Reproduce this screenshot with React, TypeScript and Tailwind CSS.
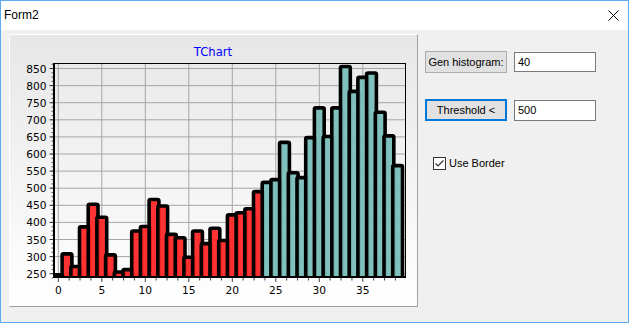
const values = [
  247, 308, 271, 387, 453, 415, 305, 255, 262, 375, 388, 467, 448, 365, 355, 298, 375, 338, 383, 347,
  422, 428, 440, 490, 517, 525, 634, 545, 531, 648, 735, 651, 735, 856, 783, 824, 837, 722, 653, 566,
];

const threshold = 500;

// screen coords of the plot
const X = (i: number) => 58.3 + i * 8.7;
const Y = (v: number) => 68.5 + (850 - v) * 0.342;
const LEFT = 54;
const RIGHT = 405.5;
const TOP = 63;
const BOTTOM = 277;

const yLabels = [850, 800, 750, 700, 650, 600, 550, 500, 450, 400, 350, 300, 250];
const xLabels = [0, 5, 10, 15, 20, 25, 30, 35];

const Chart = () => {
  const minorY: number[] = [];
  for (let v = 237.5; v <= 866; v += 12.5) minorY.push(v);
  const minorX: number[] = [];
  for (let k = 0; X(k) <= RIGHT; k += 1.25) minorX.push(k);

  return (
    <svg width={407} height={271} className="block">
      <defs>
        <clipPath id="plot">
          <rect x={LEFT} y={TOP - 2} width={RIGHT - LEFT + 2} height={BOTTOM - TOP + 2} />
        </clipPath>
      </defs>
      <g transform="translate(-10 -35)" fontFamily="'DejaVu Sans', Verdana, sans-serif" fontSize={10.67}>
        <text x={213} y={56} textAnchor="middle" fill="#0000ff" fontSize={11.6}>
          TChart
        </text>

        {/* grid */}
        {yLabels.map((v) => (
          <line key={`h${v}`} x1={LEFT} x2={RIGHT} y1={Y(v)} y2={Y(v)} stroke="#a6a6a6" strokeWidth={1} />
        ))}
        {xLabels.map((k) => (
          <line key={`v${k}`} x1={X(k)} x2={X(k)} y1={TOP} y2={BOTTOM} stroke="#a6a6a6" strokeWidth={1} />
        ))}

        {/* bars */}
        <g clipPath="url(#plot)">
          {values.map((v, i) => (
            <rect
              key={i}
              x={X(i) - 4.9}
              y={Y(v)}
              width={9.8}
              height={BOTTOM + 2 - Y(v)}
              rx={1.5}
              fill={v < threshold ? "#ff2222" : "#76bcb8"}
              fillOpacity={0.92}
              stroke="#000"
              strokeWidth={3.6}
              strokeLinejoin="round"
            />
          ))}
        </g>

        {/* frame */}
        <line x1={LEFT} x2={RIGHT + 0.5} y1={TOP + 0.5} y2={TOP + 0.5} stroke="#000" strokeWidth={1} />
        <line x1={RIGHT} x2={RIGHT} y1={TOP} y2={BOTTOM} stroke="#000" strokeWidth={1} />
        <line x1={LEFT} x2={LEFT} y1={TOP} y2={BOTTOM + 1} stroke="#000" strokeWidth={2} />
        <line x1={LEFT - 1} x2={RIGHT + 0.5} y1={BOTTOM} y2={BOTTOM} stroke="#000" strokeWidth={2} />

        {/* y ticks */}
        {minorY.map((v) => (
          <line key={`my${v}`} x1={51.5} x2={53} y1={Y(v)} y2={Y(v)} stroke="#555" strokeWidth={1} />
        ))}
        {yLabels.map((v) => (
          <line key={`ty${v}`} x1={49.5} x2={53} y1={Y(v)} y2={Y(v)} stroke="#333" strokeWidth={1} />
        ))}
        {/* x ticks */}
        {minorX.map((k) => (
          <line
            key={`mx${k}`}
            x1={X(k)}
            x2={X(k)}
            y1={BOTTOM + 1}
            y2={k % 5 === 0 ? BOTTOM + 5 : BOTTOM + 3.5}
            stroke="#444"
            strokeWidth={1}
          />
        ))}

        {/* labels */}
        {yLabels.map((v) => (
          <text key={`ly${v}`} x={46.5} y={Y(v) + 4} textAnchor="end" fill="#000">
            {v}
          </text>
        ))}
        {xLabels.map((k) => (
          <text key={`lx${k}`} x={X(k)} y={294} textAnchor="middle" fill="#000">
            {k}
          </text>
        ))}
      </g>
    </svg>
  );
};

export default function App() {
  return (
    <div className="w-[629px] h-[323px] border border-[#5fabf0] bg-[#f0f0f0] flex flex-col font-['Liberation_Sans',Arial,sans-serif] text-black overflow-hidden">
      {/* title bar */}
      <div className="h-[29px] shrink-0 bg-white flex items-center justify-between pl-[3px] pr-[9px]">
        <span className="text-[12px] leading-none pb-[2px]">Form2</span>
        <svg width="11" height="11" viewBox="0 0 11 11" className="mb-[1px]">
          <path d="M0.5 0.5 L10.5 10.5 M10.5 0.5 L0.5 10.5" stroke="#000" strokeWidth="1" fill="none" />
        </svg>
      </div>

      {/* client area */}
      <div className="flex items-start pl-[8px] pt-[4px] gap-[7px]">
        <div className="w-[409px] h-[273px] border-t border-l border-white border-b border-r border-b-[#a0a0a0] border-r-[#a0a0a0] bg-linear-to-b from-[#e7e7e7] to-white">
          <Chart />
        </div>

        <div className="mt-[17px] flex flex-col text-[11px]">
          <div className="flex items-center gap-[7px]">
            <button className="w-[82px] h-[22px] border border-[#adadad] bg-[#e1e1e1] flex items-center justify-center">
              Gen histogram:
            </button>
            <div className="w-[82px] h-[20px] border border-[#7a7a7a] bg-white flex items-center pl-[3px]">40</div>
          </div>

          <div className="flex items-center gap-[7px] mt-[26px]">
            <button className="w-[82px] h-[22px] border-2 border-[#0078d7] bg-[#e1e1e1] flex items-center justify-center">
              Threshold &lt;
            </button>
            <div className="w-[82px] h-[21px] border border-[#7a7a7a] bg-white flex items-center pl-[3px]">500</div>
          </div>

          <label className="flex items-center gap-[3px] mt-[34px] ml-[8px]">
            <svg width="13" height="13" viewBox="0 0 13 13">
              <rect x="0.5" y="0.5" width="12" height="12" fill="#fff" stroke="#333" />
              <path d="M2.5 6.5 L5 9 L10.5 3.5" stroke="#333" strokeWidth="1.2" fill="none" />
            </svg>
            <span>Use Border</span>
          </label>
        </div>
      </div>
    </div>
  );
}
